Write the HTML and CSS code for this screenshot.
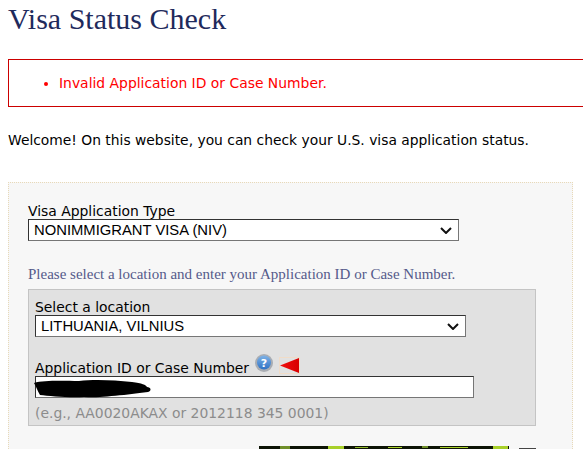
FILE: index.html
```html
<!DOCTYPE html>
<html lang="en">

<head>
    <meta charset="UTF-8">
    <title>Visa Status Check</title>
    <link rel="stylesheet" href="styles.css">
</head>

<body>
    <h1 class="title">Visa Status Check</h1>
    <div class="errors">
        <ul>
            <li>Invalid Application ID or Case Number.</li>
        </ul>
    </div>
    <p class="welcome">Welcome! On this website, you can check your U.S. visa application status.</p>
    <div class="panel">
        <label class="field_label">Visa Application Type</label>
        <select class="type_select">
            <option>NONIMMIGRANT VISA (NIV)</option>
        </select>
        <p class="hint">Please select a location and enter your Application ID or Case Number.</p>
        <div class="inner">
            <label class="field_label">Select a location</label>
            <select class="location_select">
                <option>LITHUANIA, VILNIUS</option>
            </select>
            <div class="id_label">
                <label class="field_label">Application ID or Case Number</label>
                <svg class="help" width="18" height="18" viewBox="0 0 18 18">
                    <defs>
                        <linearGradient id="ball" x1="0" y1="0" x2="0" y2="1">
                            <stop offset="0" stop-color="#7fb2e6" />
                            <stop offset="1" stop-color="#2f72c4" />
                        </linearGradient>
                    </defs>
                    <circle cx="9" cy="9" r="9" fill="#a9adb3" />
                    <circle cx="9" cy="8.5" r="7" fill="url(#ball)" />
                    <text x="9" y="12.5" text-anchor="middle" class="help_mark">?</text>
                </svg>
                <svg class="arrow" width="21" height="17" viewBox="0 0 21 17">
                    <defs>
                        <linearGradient id="tip" x1="0" y1="0" x2="1" y2="0">
                            <stop offset="0" stop-color="#f01010" />
                            <stop offset="1" stop-color="#d80000" />
                        </linearGradient>
                    </defs>
                    <rect x="0.5" y="0.5" width="20" height="16" fill="none" stroke="#f0dcc8" />
                    <path d="M1 8.5 L20 1 V16 Z" fill="url(#tip)" />
                </svg>
            </div>
            <div class="id_box">
                <input class="id_input" type="text">
                <svg class="scribble" width="118" height="20" viewBox="0 0 118 20">
                    <path d="M0 5 C10 2 30 3 45 3 C60 1 80 2 98 4 C108 5 112 7 113 9 C117 9 118 13 114 14 C105 15 98 16 90 17 C75 18 65 20 50 19 C35 20 15 18 6 17 C3 12 2 8 0 5 Z" fill="#000" />
                </svg>
            </div>
            <div class="example">(e.g., AA0020AKAX or 2012118 345 0001)</div>
        </div>
        <div class="captcha_row">
            <svg class="captcha" width="250" height="3" viewBox="0 0 250 3">
                <rect width="250" height="3" fill="#0d1405" />
                <rect x="21" width="10" height="3" fill="#6f8f2a" />
                <rect x="69" width="16" height="3" fill="#a8d02a" />
                <rect x="96" y="1" width="13" height="1" fill="#8fb82a" />
                <rect x="129" y="1" width="14" height="1" fill="#a8d02a" />
                <rect x="163" width="6" height="2" fill="#6f8f2a" />
                <rect x="181" y="1" width="28" height="1" fill="#a8d02a" />
                <rect x="234" width="15" height="3" fill="#a8d02a" />
            </svg>
            <span class="refresh"></span>
        </div>
    </div>
</body>

</html>
```
FILE: styles.css
```css
html {
    height: 449px;
    overflow: hidden;
}

body {
    margin: 0;
    padding-left: 8px;
    font: 13.9px "DejaVu Sans", Verdana, sans-serif;
    color: #000;
    background: #fff;
}

.title {
    margin: 0;
    font: normal 30px/38px "Liberation Serif", serif;
    color: #1f2a5c;
}

.errors {
    margin-top: 21px;
    height: 46px;
    border: 1px solid #c00;
    border-right: none;
    color: #f00;
    display: flex;
    align-items: center;
}

.errors ul {
    margin: 0;
    padding-left: 50px;
}

.welcome {
    margin: 25px 0 0;
    font-size: 13.85px;
    line-height: 17px;
}

.panel {
    margin-top: 33px;
    padding: 20px 19px 0;
    width: 565px;
    height: 267px;
    box-sizing: border-box;
    border: 1px dotted #e8d9b8;
    border-bottom: none;
    background: #f7f7f7;
}

.field_label {
    display: block;
    line-height: 16px;
}

.type_select,
.location_select {
    display: block;
    width: 431px;
    height: 22px;
    padding: 0 0 0 5px;
    font: 14.8px "Liberation Sans", Arial, sans-serif;
    color: #000;
    background: #fff url("data:image/svg+xml,%3Csvg xmlns='http://www.w3.org/2000/svg' width='12' height='7'%3E%3Cpath d='M1 1 L6 6 L11 1' fill='none' stroke='%23111' stroke-width='2'/%3E%3C/svg%3E") no-repeat right 6px center;
    border: 1px solid #767676;
    border-top-color: #333;
    border-left-color: #333;
    border-radius: 0;
    appearance: none;
}

.hint {
    margin: 25px 0 0;
    font: 15px/17px "Liberation Serif", serif;
    color: #555a8a;
}

.inner {
    margin-top: 6px;
    padding: 9px 6px 0;
    width: 508px;
    height: 137px;
    border: 1px solid #c4c4c4;
    background: #e1e1e1;
    box-sizing: border-box;
}

.id_label {
    display: flex;
    align-items: flex-end;
    margin-top: 18px;
    height: 21px;
}

.help {
    margin: 0 0 4px 6px;
}

.help_mark {
    font: bold 11px "DejaVu Sans", sans-serif;
    fill: #fff;
}

.arrow {
    margin: 0 0 2px 6px;
}

.id_box {
    position: relative;
    height: 22px;
}

.id_input {
    display: block;
    width: 439px;
    height: 22px;
    padding: 0;
    box-sizing: border-box;
    background: #fff;
    border: 1px solid #767676;
    border-top-color: #333;
    border-left-color: #333;
}

.scribble {
    position: absolute;
    left: -1px;
    top: 2px;
}

.example {
    margin-top: 7px;
    line-height: 17px;
    color: #8c8c8c;
}

.captcha_row {
    display: flex;
    margin: 20px 0 0 231px;
}

.refresh {
    margin: 2px 0 0 10px;
    width: 17px;
    height: 1px;
    background: #444;
}
```
